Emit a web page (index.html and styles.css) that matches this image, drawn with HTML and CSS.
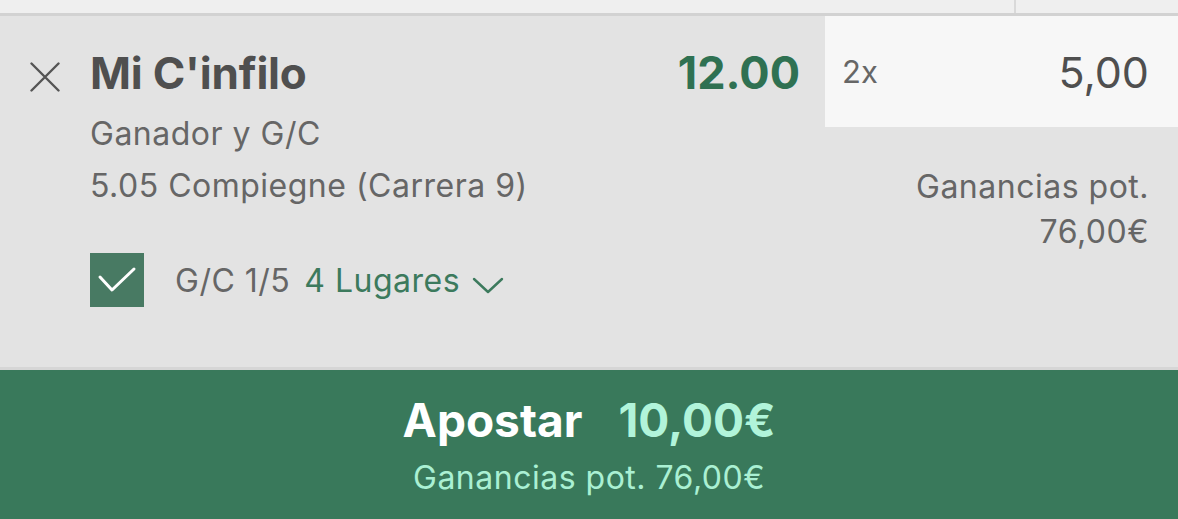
FILE: index.html
```html
<!DOCTYPE html>
<html>
<head>
    <title>Boleto de apuestas</title>
    <meta charset="UTF-8">
    <meta name="viewport" content="width=device-width, initial-scale=1.0">
    <link rel="stylesheet" href="styles.css">
</head>
<body>
<div class="top-strip">
    <div class="top-cell"></div>
    <div class="top-cell last"></div>
</div>
<div class="selection">
    <div class="close">
        <svg width="30" height="30" viewBox="0 0 30 30">
            <path d="M1.5 1.5 L28.5 28.5 M28.5 1.5 L1.5 28.5" stroke="#555" stroke-width="2.4" fill="none" stroke-linecap="round"/>
        </svg>
    </div>
    <div class="main">
        <div class="title-row">
            <span class="runner">Mi C'infilo</span>
            <span class="odds">12.00</span>
        </div>
        <div class="market">Ganador y G/C</div>
        <div class="market">5.05 Compiegne (Carrera 9)</div>
        <div class="ew-row">
            <span class="check">
                <svg width="54" height="54" viewBox="0 0 54 54">
                    <polyline points="10,24 22,37 44,16" stroke="#fff" stroke-width="3" fill="none" stroke-linecap="round" stroke-linejoin="round"/>
                </svg>
            </span>
            <span class="ew-terms">G/C 1/5</span>
            <span class="places">4 Lugares</span>
            <svg class="chevron" width="32" height="18" viewBox="0 0 32 18">
                <polyline points="2,3 16,16 30,3" stroke="#3c7a5d" stroke-width="2.4" fill="none" stroke-linecap="round" stroke-linejoin="round"/>
            </svg>
        </div>
    </div>
    <div class="side">
        <div class="stake">
            <span class="multiplier">2x</span>
            <span class="amount">5,00</span>
        </div>
        <div class="returns">Ganancias pot.<br>76,00€</div>
    </div>
</div>
<div class="place-bet">
    <div class="bet-line"><span class="bet-label">Apostar</span><span class="bet-total">10,00€</span></div>
    <div class="bet-returns">Ganancias pot. 76,00€</div>
</div>
</body>
</html>
```

FILE: styles.css
```css
body {
  margin: 0;
  font-family: Inter, "Noto Sans", sans-serif;
  background: #e3e3e3;
  color: #555;
}
.top-strip {
  display: flex;
  height: 13px;
  background: #efefef;
  border-bottom: 3px solid #d2d2d2;
}
.top-cell {
  width: 1014px;
  border-right: 2px solid #d9d9d9;
}
.top-cell.last {
  flex: 1;
  border-right: none;
}
.selection {
  display: flex;
  height: 351px;
  background: #e3e3e3;
  border-bottom: 3px solid #d6d6d6;
}
.close {
  width: 90px;
  flex-shrink: 0;
  padding: 46px 0 0 30px;
  box-sizing: border-box;
}
.main {
  flex: 1;
  padding: 29px 25px 0 0;
}
.title-row {
  display: flex;
  justify-content: space-between;
  line-height: 56px;
}
.runner {
  font-size: 44px;
  font-weight: 700;
  color: #4f4f4f;
  letter-spacing: -0.2px;
}
.odds {
  font-size: 45px;
  font-weight: 700;
  color: #2f7152;
}
.market {
  font-size: 32px;
  line-height: 52px;
  letter-spacing: 0.5px;
  color: #666;
}
.title-row + .market {
  margin-top: 7px;
}
.ew-row {
  display: flex;
  align-items: center;
  height: 54px;
  margin-top: 41px;
  font-size: 32px;
  letter-spacing: 0.5px;
}
.check {
  width: 54px;
  height: 54px;
  background: #487a63;
  margin-right: 31px;
}
.check svg {
  display: block;
}
.ew-terms {
  color: #666;
  margin-right: 14px;
}
.places {
  color: #3c7a5d;
}
.chevron {
  margin: 10px 0 0 12px;
}
.side {
  width: 353px;
  flex-shrink: 0;
}
.stake {
  display: flex;
  justify-content: space-between;
  align-items: center;
  height: 111px;
  padding: 0 29px 0 17px;
  background: #f7f7f7;
  box-sizing: border-box;
}
.multiplier {
  font-size: 31px;
  color: #666;
}
.amount {
  font-size: 43px;
  color: #4f4f4f;
}
.returns {
  margin-top: 37px;
  padding-right: 29px;
  text-align: right;
  font-size: 32px;
  line-height: 45px;
  letter-spacing: 0.5px;
  color: #666;
}
.place-bet {
  height: 149px;
  padding-top: 22px;
  box-sizing: border-box;
  background: #39795b;
  text-align: center;
}
.bet-line {
  line-height: 56px;
  font-size: 46px;
  font-weight: 700;
}
.bet-label {
  color: #fff;
  margin-right: 36px;
}
.bet-total {
  color: #b1f4da;
}
.bet-returns {
  margin-top: 10px;
  font-size: 32px;
  line-height: 40px;
  letter-spacing: 0.5px;
  color: #aaf0d3;
}
```
